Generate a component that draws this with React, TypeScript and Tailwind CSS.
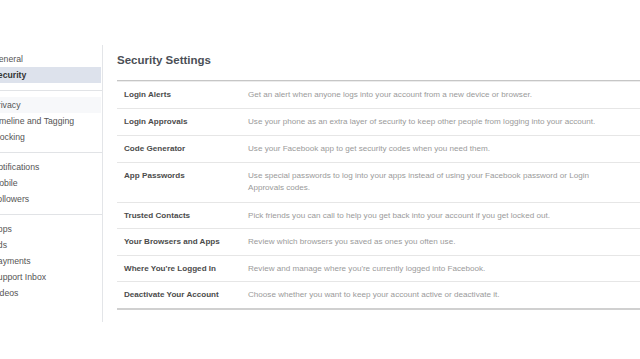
const groups = [
  ['General', 'Security'],
  ['Privacy', 'Timeline and Tagging', 'Blocking'],
  ['Notifications', 'Mobile', 'Followers'],
  ['Apps', 'Ads', 'Payments', 'Support Inbox', 'Videos'],
];

// row padding is tuned per row so the separators land where the screenshot has them
const rows = [
  { label: 'Login Alerts', pad: 'py-[7px]', text: 'Get an alert when anyone logs into your account from a new device or browser.' },
  { label: 'Login Approvals', pad: 'py-[7px]', text: 'Use your phone as an extra layer of security to keep other people from logging into your account.' },
  { label: 'Code Generator', pad: 'py-[7px]', text: 'Use your Facebook app to get security codes when you need them.' },
  { label: 'App Passwords', pad: 'pt-[7px] pb-[8px]', text: 'Use special passwords to log into your apps instead of using your Facebook password or Login Approvals codes.' },
  { label: 'Trusted Contacts', pad: 'pt-[7px] pb-[6px]', text: 'Pick friends you can call to help you get back into your account if you get locked out.' },
  { label: 'Your Browsers and Apps', pad: 'py-[7px]', text: 'Review which browsers you saved as ones you often use.' },
  { label: "Where You're Logged In", pad: 'pt-[7px] pb-[6px]', text: "Review and manage where you're currently logged into Facebook." },
  { label: 'Deactivate Your Account', pad: 'pt-[7px] pb-[7px]', text: 'Choose whether you want to keep your account active or deactivate it.' },
];

const SideItem = ({ name }: { name: string }) => {
  const active = name === 'Security';
  const hover = name === 'Privacy';
  return (
    <div
      className={
        'h-4 leading-4 whitespace-nowrap ' +
        (active ? 'bg-[#dde2ec] text-[#333] font-bold' : hover ? 'bg-[#f7f8fa] text-[#555]' : 'text-[#555]')
      }
    >
      <span className="ml-[-8px]">{name}</span>
    </div>
  );
};

export default function App() {
  return (
    <div className="h-[359px] w-[640px] overflow-hidden bg-white pt-[44px] font-['Liberation_Sans',Arial,sans-serif]">
      <div className="flex">
        <aside className="mt-px h-[277px] w-[103px] shrink-0 border-r border-[#e3e5e8] text-[8.7px]">
          {groups.map((g, i) => (
            <div key={i} className={'pr-px pt-[6px] pb-[7px] ' + (i < groups.length - 1 ? 'border-b border-[#e1e3e6]' : '')}>
              {g.map((n) => (
                <SideItem key={n} name={n} />
              ))}
            </div>
          ))}
        </aside>

        <main className="ml-[14px] w-[620px] shrink-0">
          <h1 className="pt-[8px] pb-[12px] text-[11.5px] leading-4 font-bold text-[#4b4f56]">Security Settings</h1>
          <div className="border-t border-b-2 border-t-[#c6c6c6] border-b-[#d0d0d0]">
            <div className="border-t border-[#ececec]" />
            {rows.map((r, i) => (
              <div
                key={r.label}
                className={'flex text-[8.1px] leading-[12px] ' + r.pad + (i < rows.length - 1 ? ' border-b border-[#e6e6e6]' : '')}
              >
                <div className="w-[131px] shrink-0 pl-[7px] font-bold text-[#4b4b4b]">{r.label}</div>
                <div className="w-[362px] text-[#9a9a9a]">{r.text}</div>
              </div>
            ))}
          </div>
        </main>
      </div>
    </div>
  );
}
